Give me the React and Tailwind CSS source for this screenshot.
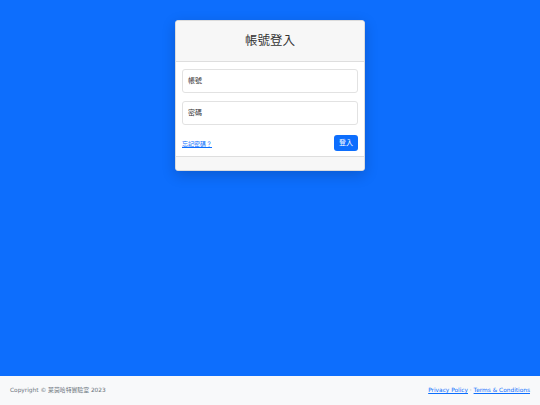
export default function App() {
  const font = { fontFamily: '"DejaVu Sans", "Noto Sans CJK TC", sans-serif' };
  return (
    <div className="flex h-[405px] w-[540px] flex-col bg-[#0d6efd]" style={font}>
      <main className="flex flex-1 justify-center pt-[20px]">
        <div className="flex h-[151px] w-[190px] flex-col overflow-hidden rounded-[3px] border border-[#dcdcdc] bg-white shadow-[0_4px_14px_rgba(0,0,0,0.18)]">
          <div className="flex h-[41px] items-center justify-center border-b border-[#dedede] bg-[#f7f7f7] text-[12.5px] text-[#333]">
            帳號登入
          </div>
          <div className="flex flex-1 flex-col px-[6px] pt-[7px]">
            <div className="flex h-[24px] items-center rounded-[3px] border border-[#e2e2e2] px-[5px] text-[7px] text-[#333]">帳號</div>
            <div className="mt-[8px] flex h-[24px] items-center rounded-[3px] border border-[#e2e2e2] px-[5px] text-[7px] text-[#333]">密碼</div>
            <div className="mt-[10px] flex items-center justify-between">
              <a className="text-[6px] text-[#0d6efd] underline">忘記密碼？</a>
              <button className="flex h-[16px] w-[24px] items-center justify-center rounded-[3px] bg-[#0d6efd] text-[7px] text-white">登入</button>
            </div>
          </div>
          <div className="h-[14px] border-t border-[#dedede] bg-[#f7f7f7]"></div>
        </div>
      </main>
      <footer className="flex h-[29px] items-center justify-between bg-[#f8f9fa] px-[10px] text-[5.85px]">
        <span className="text-[#6c757d]">Copyright © 萊茵哈特實驗室 2023</span>
        <span className="text-[#6c757d]">
          <a className="text-[#0d6efd] underline">Privacy Policy</a> · <a className="text-[#0d6efd] underline">Terms &amp; Conditions</a>
        </span>
      </footer>
    </div>
  );
}
